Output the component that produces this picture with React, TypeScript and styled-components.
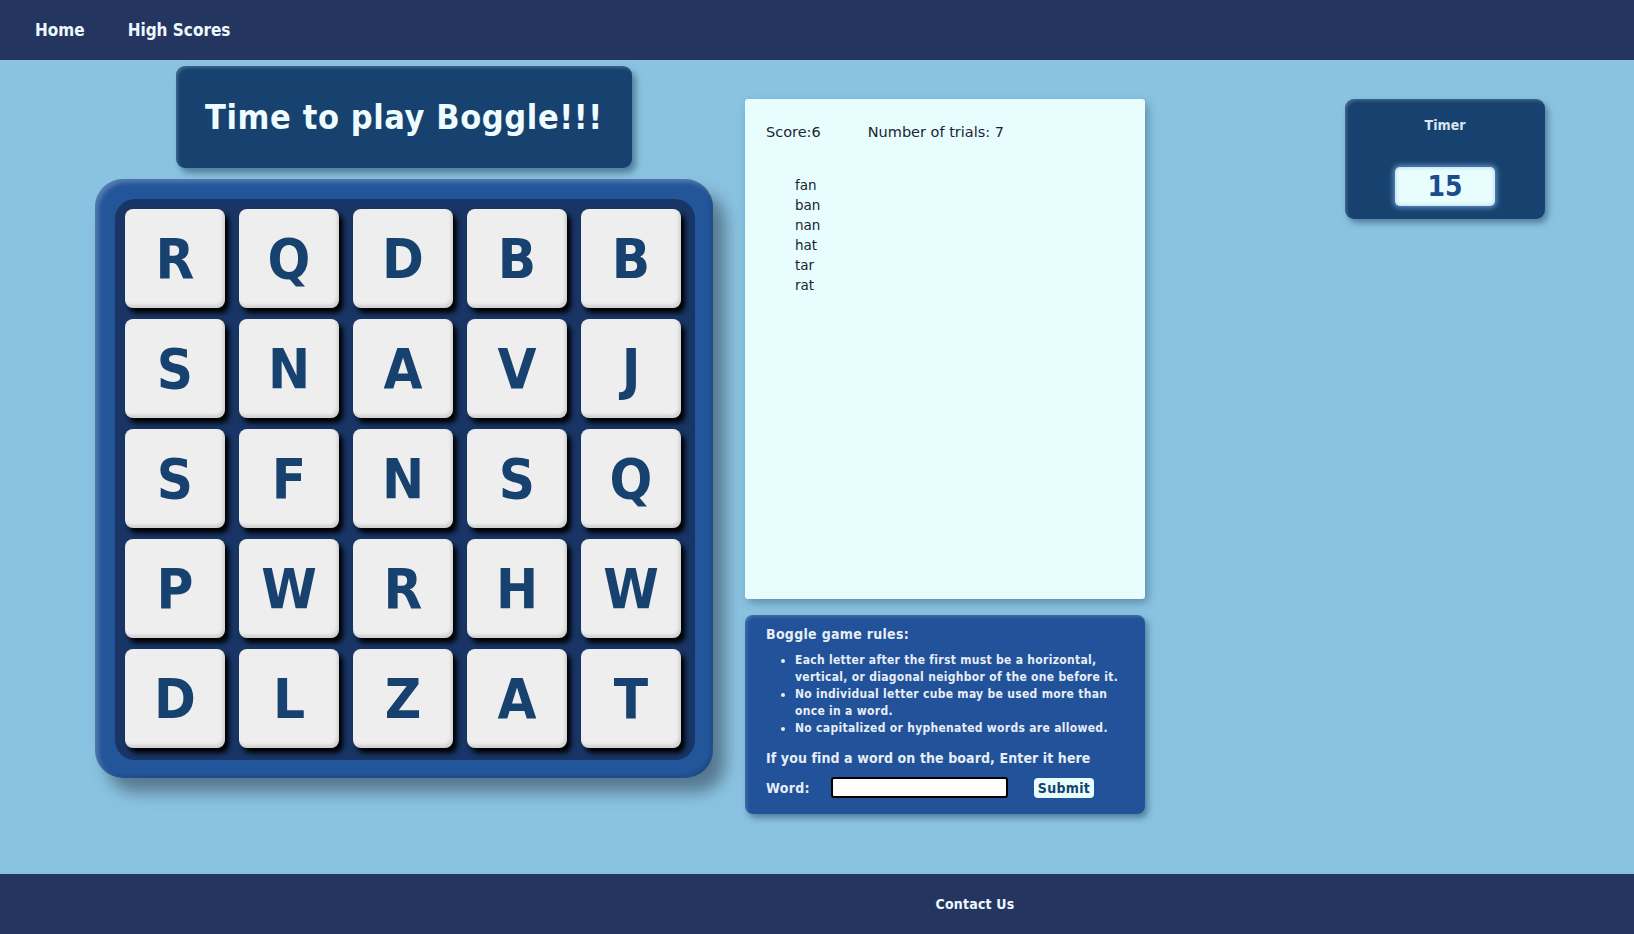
import React from "react";
import styled, { createGlobalStyle } from "styled-components";

const GlobalStyle = createGlobalStyle`
  html, body { margin: 0; padding: 0; }
  body {
    background: #8ac3e1;
    font-family: "DejaVu Sans Condensed", "DejaVu Sans", sans-serif;
    font-stretch: condensed;
  }
`;

const condensed = `"DejaVu Sans Condensed", "DejaVu Sans", sans-serif`;

const NavBar = styled.header`
  height: 60px;
  background: #243660;
  display: flex;
  align-items: center;
  padding-left: 35px;
  gap: 43px;
`;

const NavLink = styled.a`
  font-family: ${condensed};
  font-stretch: condensed;
  font-weight: bold;
  font-size: 17px;
  color: #eef8ff;
  text-decoration: none;
`;

const Main = styled.main`
  height: calc(100vh - 120px);
  display: flex;
  align-items: flex-start;
  padding-left: 95px;
  box-sizing: border-box;
`;

const LeftColumn = styled.section`
  width: 618px;
  display: flex;
  flex-direction: column;
  align-items: center;
`;

const TitleBox = styled.div`
  margin-top: 6px;
  width: 456px;
  height: 102px;
  box-sizing: border-box;
  background: #17426f;
  border-radius: 9px;
  box-shadow: 4px 5px 6px rgba(40, 70, 100, 0.55),
    inset 2px 2px 3px rgba(255, 255, 255, 0.18);
  display: flex;
  align-items: center;
  justify-content: center;
`;

const Title = styled.h1`
  margin: 0;
  font-family: ${condensed};
  font-stretch: condensed;
  font-weight: bold;
  font-size: 34px;
  letter-spacing: 0.6px;
  color: #eefcff;
`;

const Board = styled.div`
  margin-top: 11px;
  width: 618px;
  height: 599px;
  box-sizing: border-box;
  padding: 20px 18px 18px 20px;
  background: #22559a;
  border-radius: 28px;
  box-shadow: 12px 14px 16px rgba(70, 95, 115, 0.75),
    inset 3px 3px 5px rgba(255, 255, 255, 0.25),
    inset -2px -2px 4px rgba(0, 0, 0, 0.15);
`;

const Tray = styled.div`
  height: 100%;
  box-sizing: border-box;
  background: #183565;
  border-radius: 20px;
  padding: 10px 14px 12px 10px;
  display: grid;
  grid-template-columns: repeat(5, 100px);
  grid-auto-rows: 99px;
  column-gap: 14px;
  row-gap: 11px;
`;

const Tile = styled.div`
  background: #eeeeee;
  border-radius: 8px;
  box-shadow: 4px 5px 5px #000,
    inset -2px -3px 3px rgba(0, 0, 0, 0.12);
  display: flex;
  align-items: center;
  justify-content: center;
  font-family: ${condensed};
  font-stretch: condensed;
  font-weight: bold;
  font-size: 56px;
  color: #17426f;
`;

const MiddleColumn = styled.section`
  margin-left: 32px;
  margin-top: 39px;
  width: 400px;
  display: flex;
  flex-direction: column;
  gap: 16px;
`;

const ScorePanel = styled.div`
  height: 500px;
  box-sizing: border-box;
  background: #e8fdfd;
  border-radius: 3px;
  box-shadow: 3px 4px 8px rgba(40, 80, 110, 0.45);
  padding: 21px 21px;
  font-family: "DejaVu Sans", sans-serif;
  font-stretch: normal;
  color: #1b2433;
`;

const ScoreRow = styled.div`
  display: flex;
  gap: 47px;
  font-size: 14.5px;
  height: 24px;
  align-items: center;
`;

const WordList = styled.ul`
  list-style: none;
  margin: 31px 0 0 0;
  padding: 0 0 0 29px;
  font-size: 13.5px;
  line-height: 20px;
`;

const RulesPanel = styled.div`
  height: 199px;
  box-sizing: border-box;
  background: #22529a;
  border-radius: 8px;
  box-shadow: 3px 4px 6px rgba(30, 60, 90, 0.5),
    inset 2px 2px 3px rgba(255, 255, 255, 0.15);
  padding: 9px 15px 0 21px;
  color: #e6eef6;
  font-family: ${condensed};
  font-stretch: condensed;
  font-weight: bold;
`;

const RulesTitle = styled.div`
  font-size: 14px;
  letter-spacing: 0.3px;
  line-height: 20px;
`;

const RuleList = styled.ul`
  margin: 8px 0 0 0;
  padding-left: 29px;
  font-size: 12px;
  letter-spacing: 0.3px;
  line-height: 17px;
`;

const Prompt = styled.div`
  margin-top: 11px;
  font-size: 14px;
  letter-spacing: 0.1px;
  line-height: 20px;
`;

const WordForm = styled.form`
  margin-top: 9px;
  display: flex;
  align-items: center;
`;

const WordLabel = styled.label`
  font-size: 14px;
  letter-spacing: 0.3px;
  width: 65px;
`;

const WordInput = styled.input`
  width: 177px;
  height: 21px;
  box-sizing: border-box;
  border: 2px solid #000;
  border-radius: 3px;
  background: #fff;
  outline: none;
`;

const SubmitButton = styled.button`
  margin-left: 26px;
  width: 60px;
  height: 20px;
  padding: 0;
  border: none;
  border-radius: 4px;
  background: #e8fdfd;
  color: #17426f;
  font-family: ${condensed};
  font-stretch: condensed;
  font-weight: bold;
  font-size: 14px;
  letter-spacing: 0.3px;
`;

const TimerCard = styled.aside`
  margin-left: 200px;
  margin-top: 39px;
  width: 200px;
  height: 120px;
  box-sizing: border-box;
  background: #17426f;
  border-radius: 9px;
  box-shadow: 3px 4px 6px rgba(40, 70, 100, 0.55),
    inset 2px 2px 3px rgba(255, 255, 255, 0.18);
  display: flex;
  flex-direction: column;
  align-items: center;
  padding-top: 18px;
`;

const TimerLabel = styled.div`
  font-family: ${condensed};
  font-stretch: condensed;
  font-weight: bold;
  font-size: 14px;
  color: #dbe6f0;
  height: 20px;
`;

const TimerValue = styled.div`
  margin-top: 30px;
  width: 100px;
  height: 39px;
  box-sizing: border-box;
  background: #e8fdfd;
  border-radius: 5px;
  box-shadow: 0 0 5px 2px rgba(120, 170, 220, 0.7),
    inset 0 0 4px rgba(120, 170, 220, 0.6);
  display: flex;
  align-items: center;
  justify-content: center;
  font-family: ${condensed};
  font-stretch: condensed;
  font-weight: bold;
  font-size: 28px;
  color: #1b4d8c;
`;

const Footer = styled.footer`
  height: 60px;
  background: #243660;
  display: flex;
  align-items: center;
  justify-content: center;
  padding-left: 316px;
  box-sizing: border-box;
`;

const FooterLink = styled.a`
  font-family: ${condensed};
  font-stretch: condensed;
  font-weight: bold;
  font-size: 14px;
  color: #eef8ff;
  text-decoration: none;
  letter-spacing: 0.2px;
`;

const letters = [
  "R", "Q", "D", "B", "B",
  "S", "N", "A", "V", "J",
  "S", "F", "N", "S", "Q",
  "P", "W", "R", "H", "W",
  "D", "L", "Z", "A", "T",
];

const words = ["fan", "ban", "nan", "hat", "tar", "rat"];

export default function App() {
  return (
    <>
      <GlobalStyle />
      <NavBar>
        <NavLink href="#">Home</NavLink>
        <NavLink href="#">High Scores</NavLink>
      </NavBar>
      <Main>
        <LeftColumn>
          <TitleBox>
            <Title>Time to play Boggle!!!</Title>
          </TitleBox>
          <Board>
            <Tray>
              {letters.map((l, i) => (
                <Tile key={i}>{l}</Tile>
              ))}
            </Tray>
          </Board>
        </LeftColumn>
        <MiddleColumn>
          <ScorePanel>
            <ScoreRow>
              <span>Score:6</span>
              <span>Number of trials: 7</span>
            </ScoreRow>
            <WordList>
              {words.map((w) => (
                <li key={w}>{w}</li>
              ))}
            </WordList>
          </ScorePanel>
          <RulesPanel>
            <RulesTitle>Boggle game rules:</RulesTitle>
            <RuleList>
              <li>Each letter after the first must be a horizontal, vertical, or diagonal neighbor of the one before it.</li>
              <li>No individual letter cube may be used more than once in a word.</li>
              <li>No capitalized or hyphenated words are allowed.</li>
            </RuleList>
            <Prompt>If you find a word on the board, Enter it here</Prompt>
            <WordForm onSubmit={(e) => e.preventDefault()}>
              <WordLabel>Word:</WordLabel>
              <WordInput type="text" />
              <SubmitButton type="submit">Submit</SubmitButton>
            </WordForm>
          </RulesPanel>
        </MiddleColumn>
        <TimerCard>
          <TimerLabel>Timer</TimerLabel>
          <TimerValue>15</TimerValue>
        </TimerCard>
      </Main>
      <Footer>
        <FooterLink href="#">Contact Us</FooterLink>
      </Footer>
    </>
  );
}
